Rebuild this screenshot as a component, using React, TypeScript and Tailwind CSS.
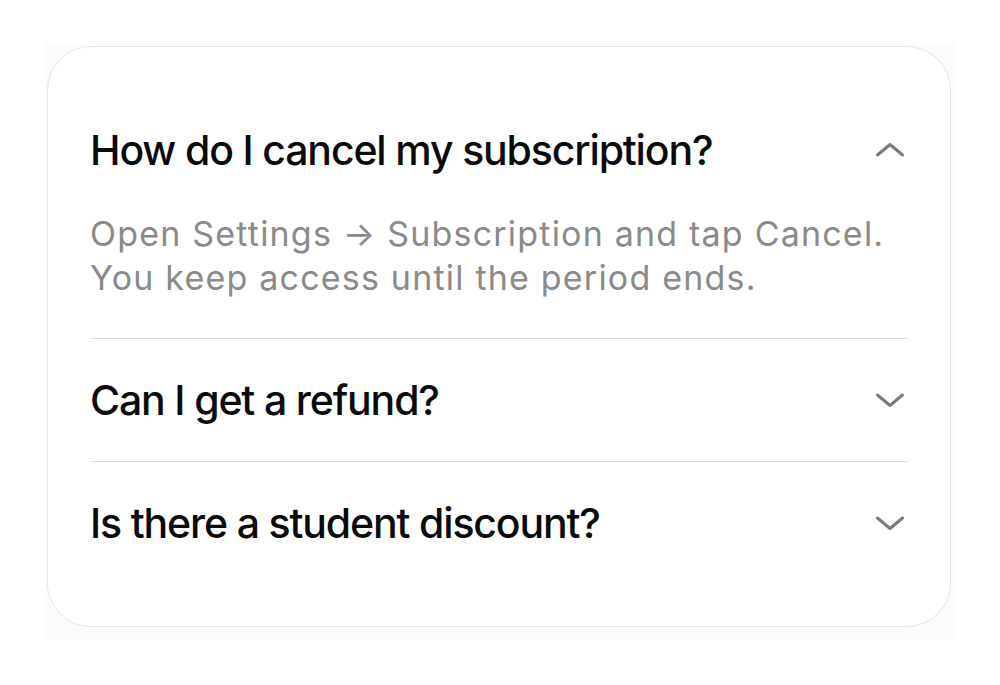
import React from "react";

const font = { fontFamily: "Inter, 'Liberation Sans', sans-serif" };

function Chevron({ up }: { up?: boolean }) {
  return (
    <svg width="32" height="32" viewBox="0 0 32 32" className="shrink-0 mr-[2px]" fill="none">
      <polyline
        points={up ? "3.5,21 16,10.5 28.5,21" : "3.5,11 16,21.5 28.5,11"}
        stroke="#7a7a7a"
        strokeWidth="3"
        strokeLinecap="round"
        strokeLinejoin="round"
      />
    </svg>
  );
}

function Question({ text, up }: { text: string; up?: boolean }) {
  return (
    <div className="flex items-center justify-between h-[50px]">
      <span className="text-[41px] leading-[50px] font-medium text-[#0a0a0a] tracking-[-1.15px]">{text}</span>
      <Chevron up={up} />
    </div>
  );
}

export default function App() {
  return (
    <div className="w-[1000px] h-[685px] bg-white pt-[44px] pl-[45px]" style={font}>
      <div className="w-[910px] h-[595px] bg-[#fbfbfb] pt-[2px] pl-[2px]">
        <div className="w-[904px] h-[581px] bg-white rounded-[44px] border-[1.5px] border-[#e4e4e4] px-[42px] pt-[42px]">
          <div className="pt-[36px] pb-[38px]">
            <Question text="How do I cancel my subscription?" up />
            <p className="mt-[37px] text-[34px] leading-[44px] text-[#8a8a8a] tracking-[1.2px]">
              Open Settings → Subscription and tap Cancel.
              <br />
              You keep access until the period ends.
            </p>
          </div>
          <div className="border-t-[1.5px] border-[#dcdcdc] py-[36px]">
            <Question text="Can I get a refund?" />
          </div>
          <div className="border-t-[1.5px] border-[#dcdcdc] py-[36px]">
            <Question text="Is there a student discount?" />
          </div>
        </div>
      </div>
    </div>
  );
}
